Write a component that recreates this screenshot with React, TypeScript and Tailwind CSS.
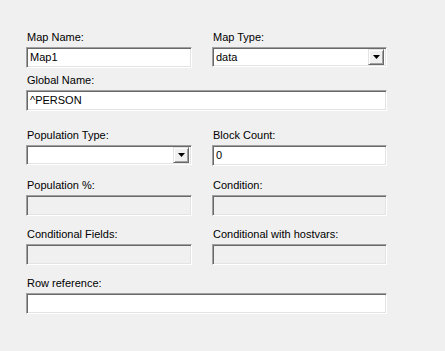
import React from 'react';

const sunken =
  'border border-t-[#a0a0a0] border-l-[#a0a0a0] border-r-white border-b-white shadow-[inset_1px_1px_0_#696969,inset_-1px_-1px_0_#e3e3e3]';

const Label = ({ text }: { text: string }) => (
  <div className="h-[13px] leading-[13px] mb-[3px] pl-px text-black">{text}</div>
);

const Edit = ({ label, value = '', disabled = false }: { label: string; value?: string; disabled?: boolean }) => (
  <div>
    <Label text={label} />
    <div className={`h-[21px] ${sunken} ${disabled ? 'bg-[#f0f0f0]' : 'bg-white'} flex items-center pl-[3px] text-black`}>
      {value}
    </div>
  </div>
);

const Combo = ({ label, value = '' }: { label: string; value?: string }) => (
  <div>
    <Label text={label} />
    <div className={`h-[20px] ${sunken} bg-white flex items-center pl-[3px] pr-[2px] text-black`}>
      <span className="flex-1">{value}</span>
      <div className="w-[16px] h-[16px] bg-[#f0f0f0] border border-t-[#e3e3e3] border-l-[#e3e3e3] border-r-[#696969] border-b-[#696969] shadow-[inset_1px_1px_0_#ffffff,inset_-1px_-1px_0_#a0a0a0] flex items-center justify-center">
        <svg width="7" height="4" viewBox="0 0 7 4">
          <polygon points="0,0 7,0 3.5,4" fill="#000" />
        </svg>
      </div>
    </div>
  </div>
);

const App = () => {
  return (
    <div className="w-[445px] h-[351px] bg-[#f0f0f0] font-['Liberation_Sans',Arial,sans-serif] text-[11px] pt-[31px] pl-[26px]">
      <div className="w-[361px] grid grid-cols-[166px_175px] gap-x-[20px]">
        <Edit label="Map Name:" value="Map1" />
        <Combo label="Map Type:" value="data" />
        <div className="col-span-2 mt-[6px]">
          <Edit label="Global Name:" value="^PERSON" />
        </div>
        <div className="mt-[18px]">
          <Combo label="Population Type:" />
        </div>
        <div className="mt-[18px]">
          <Edit label="Block Count:" value="0" />
        </div>
        <div className="mt-[13px]">
          <Edit label="Population %:" disabled />
        </div>
        <div className="mt-[13px]">
          <Edit label="Condition:" disabled />
        </div>
        <div className="mt-[12px]">
          <Edit label="Conditional Fields:" disabled />
        </div>
        <div className="mt-[12px]">
          <Edit label="Conditional with hostvars:" disabled />
        </div>
        <div className="col-span-2 mt-[12px]">
          <Edit label="Row reference:" />
        </div>
      </div>
    </div>
  );
};

export default App;
